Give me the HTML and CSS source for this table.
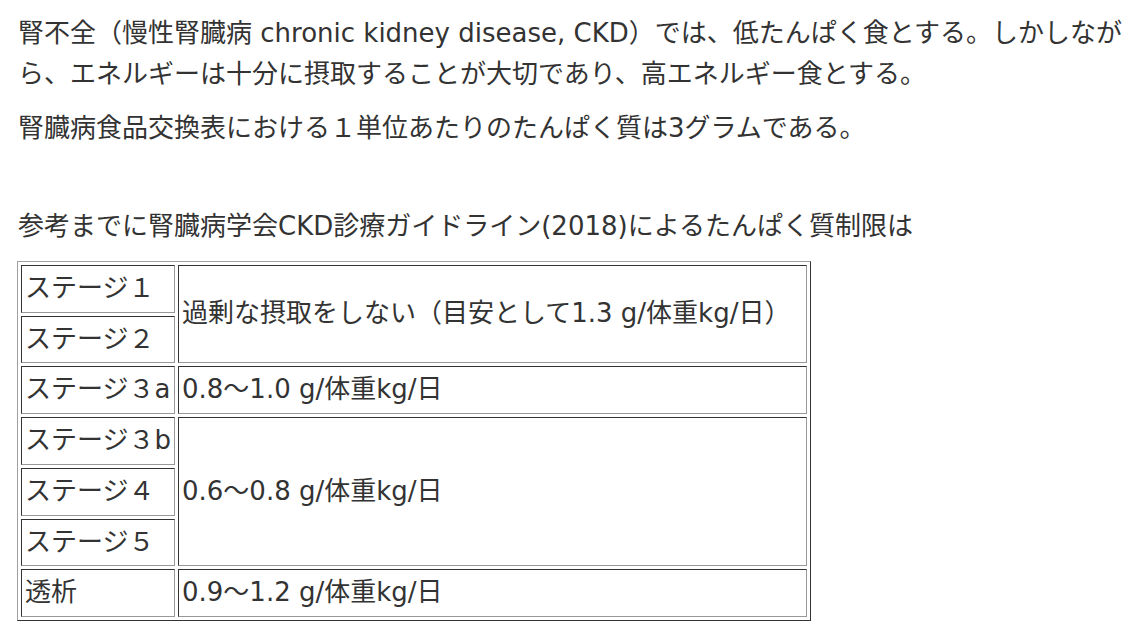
FILE: index.html
```html
<!DOCTYPE html>
<html lang="ja">
<head>
<meta charset="utf-8">
<title>CKD</title>
<link rel="stylesheet" href="styles.css">
</head>
<body>
<div class="content">
  <p class="para">腎不全（慢性腎臓病 chronic kidney disease, CKD）では、低たんぱく食とする。しかしながら、エネルギーは十分に摂取することが大切であり、高エネルギー食とする。</p>
  <p class="para">腎臓病食品交換表における１単位あたりのたんぱく質は3グラムである。</p>
  <p class="para lead">参考までに腎臓病学会CKD診療ガイドライン(2018)によるたんぱく質制限は</p>
  <table class="limits">
    <tbody>
      <tr><td class="stage">ステージ１</td><td rowspan="2">過剰な摂取をしない（目安として1.3 g/体重kg/日）</td></tr>
      <tr><td class="stage">ステージ２</td></tr>
      <tr><td class="stage">ステージ３a</td><td>0.8～1.0 g/体重kg/日</td></tr>
      <tr><td class="stage">ステージ３b</td><td rowspan="3">0.6～0.8 g/体重kg/日</td></tr>
      <tr><td class="stage">ステージ４</td></tr>
      <tr><td class="stage">ステージ５</td></tr>
      <tr><td class="stage">透析</td><td>0.9～1.2 g/体重kg/日</td></tr>
    </tbody>
  </table>
</div>
</body>
</html>
```
FILE: styles.css
```css
html, body {
  margin: 0;
  padding: 0;
  background: #fff;
}
body {
  font-family: "DejaVu Sans", "Noto Sans CJK JP", sans-serif;
  font-size: 26px;
  color: #333;
}
.content {
  padding: 13px 0 0 18px;
}
.para {
  margin: 0 0 13px 0;
  line-height: 41px;
}
.lead {
  margin-top: 57px;
  margin-bottom: 14px;
}
.limits {
  border: 1px solid;
  border-color: #a0a0a0 #333 #333 #a0a0a0;
  border-spacing: 3px;
  width: 794px;
  margin-left: -1px;
}
.limits td {
  border: 1px solid;
  border-color: #333 #999 #999 #333;
  padding: 2px 3px;
  line-height: 41.7px;
  vertical-align: middle;
  white-space: nowrap;
}
.limits td.stage {
  width: 143px;
  overflow: hidden;
}
```
